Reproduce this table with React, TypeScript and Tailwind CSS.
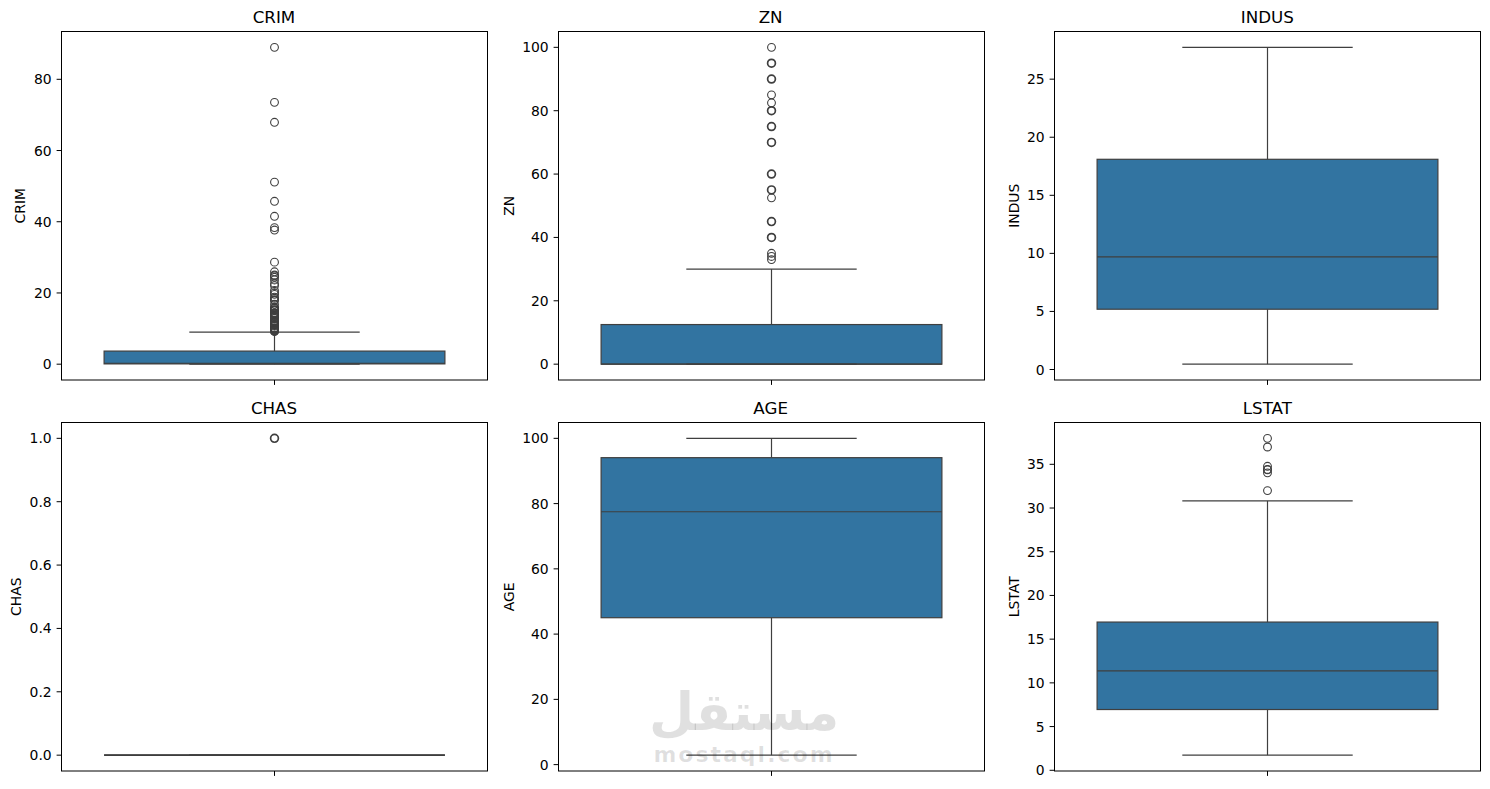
import React from 'react'

// ── Box plot data (seaborn-style, one box per panel) ─────────────────────────
type BoxStats = {
  title: string
  min: number
  max: number
  q1: number
  med: number
  q3: number
  lo: number
  hi: number
  ticks: number[]
  decimals?: number
  labelX: number
  fliers: { v: number; heavy?: boolean }[]
}

const panels: BoxStats[] = [
  {
    title: 'CRIM', min: 0.00632, max: 88.9762,
    q1: 0.082, med: 0.2565, q3: 3.677, lo: 0.00632, hi: 8.98,
    ticks: [0, 20, 40, 60, 80], labelX: 20,
    fliers: [
      88.9762, 73.5341, 67.9208, 51.1358, 45.7461, 41.5292, 38.3518, 37.6619, 28.6558,
      25.9406, 25.0461, 24.8017, 24.3938, 23.6482, 22.5971, 22.0511, 20.7162, 20.0849,
      19.6091, 18.811, 18.4982, 18.0846, 17.8667, 16.8118, 15.8744, 15.8603, 15.5757,
      15.288, 15.1772, 15.0234, 14.4383, 14.3337, 14.2362, 14.0507, 13.9134, 13.6781,
      13.5222, 13.3598, 13.0751, 12.8023, 12.2472, 12.0482, 11.9511, 11.8123, 11.5779,
      11.1604, 11.1081, 11.0874, 10.8342, 10.6718, 10.233, 10.0623, 9.96654, 9.92485,
      9.91655, 9.82349, 9.72418, 9.59571, 9.51363, 9.39063, 9.33889, 9.2323, 9.18702,
    ].map((v) => ({ v })),
  },
  {
    title: 'ZN', min: 0, max: 100,
    q1: 0, med: 0, q3: 12.5, lo: 0, hi: 30,
    ticks: [0, 20, 40, 60, 80, 100], labelX: 11.7,
    fliers: [
      { v: 33 }, { v: 34 }, { v: 35 }, { v: 40, heavy: true }, { v: 45, heavy: true },
      { v: 52.5 }, { v: 55, heavy: true }, { v: 60, heavy: true }, { v: 70, heavy: true },
      { v: 75, heavy: true }, { v: 80, heavy: true }, { v: 82.5 }, { v: 85 },
      { v: 90, heavy: true }, { v: 95, heavy: true }, { v: 100 },
    ],
  },
  {
    title: 'INDUS', min: 0.46, max: 27.74,
    q1: 5.19, med: 9.69, q3: 18.1, lo: 0.46, hi: 27.74,
    ticks: [0, 5, 10, 15, 20, 25], labelX: 20.7,
    fliers: [],
  },
  {
    title: 'CHAS', min: 0, max: 1,
    q1: 0, med: 0, q3: 0, lo: 0, hi: 0,
    ticks: [0, 0.2, 0.4, 0.6, 0.8, 1.0], decimals: 1, labelX: 16,
    fliers: [{ v: 1, heavy: true }],
  },
  {
    title: 'AGE', min: 2.9, max: 100,
    q1: 45.025, med: 77.5, q3: 94.075, lo: 2.9, hi: 100,
    ticks: [0, 20, 40, 60, 80, 100], labelX: 11.7,
    fliers: [],
  },
  {
    title: 'LSTAT', min: 1.73, max: 37.97,
    q1: 6.95, med: 11.36, q3: 16.955, lo: 1.73, hi: 30.81,
    ticks: [0, 5, 10, 15, 20, 25, 30, 35], labelX: 20.7,
    fliers: [31.99, 34.02, 34.37, 34.41, 34.77, 36.98, 37.97].map((v) => ({ v })),
  },
]

const LINE = '#3f3f3f'
const FILL = '#3274a1'

// axes rectangle inside the panel svg
const AX = { x: 61.5, y: 0.5, w: 426, h: 348.5 }

function BoxPanel({ p }: { p: BoxStats }) {
  const r = p.max - p.min
  const yMin = p.min - 0.05 * r
  const yMax = p.max + 0.05 * r
  const y = (v: number) => AX.y + (AX.h * (yMax - v)) / (yMax - yMin)

  const cx = AX.x + AX.w / 2
  const bx0 = AX.x + AX.w * 0.1
  const bx1 = AX.x + AX.w * 0.9
  const cap0 = AX.x + AX.w * 0.3
  const cap1 = AX.x + AX.w * 0.7

  return (
    <div className="flex flex-col">
      <div className="h-[31px] w-[487px] pl-[61px] pt-[8px] text-center text-[16.7px] leading-[19px] text-black">
        {p.title}
      </div>
      <svg width="496" height="360" className="block overflow-visible">
        {/* box */}
        {p.q3 > p.q1 ? (
          <rect x={bx0} y={y(p.q3)} width={bx1 - bx0} height={y(p.q1) - y(p.q3)} fill={FILL} stroke={LINE} strokeWidth={1.2} />
        ) : (
          <line x1={bx0} x2={bx1} y1={y(p.q1)} y2={y(p.q1)} stroke={LINE} strokeWidth={1.6} />
        )}
        {/* whiskers */}
        <line x1={cx} x2={cx} y1={y(p.q3)} y2={y(p.hi)} stroke={LINE} strokeWidth={1.2} />
        <line x1={cx} x2={cx} y1={y(p.q1)} y2={y(p.lo)} stroke={LINE} strokeWidth={1.2} />
        <line x1={cap0} x2={cap1} y1={y(p.hi)} y2={y(p.hi)} stroke={LINE} strokeWidth={1.2} />
        <line x1={cap0} x2={cap1} y1={y(p.lo)} y2={y(p.lo)} stroke={LINE} strokeWidth={1.2} />
        {/* median */}
        <line x1={bx0} x2={bx1} y1={y(p.med)} y2={y(p.med)} stroke={LINE} strokeWidth={1.2} />
        {/* fliers */}
        {p.fliers.map((f, i) => (
          <circle key={i} cx={cx} cy={y(f.v)} r={3.9} fill="none" stroke={LINE} strokeWidth={f.heavy ? 1.7 : 1.1} />
        ))}

        {/* spines */}
        <rect x={AX.x} y={AX.y} width={AX.w} height={AX.h} fill="none" stroke="#000" strokeWidth={1} />

        {/* y ticks */}
        {p.ticks.map((t) => (
          <g key={t}>
            <line x1={AX.x - 4.9} x2={AX.x} y1={y(t)} y2={y(t)} stroke="#000" strokeWidth={1} />
            <text x={AX.x - 9.8} y={y(t)} textAnchor="end" dominantBaseline="central" fontSize="13.9" fill="#000">
              {p.decimals ? t.toFixed(p.decimals) : t}
            </text>
          </g>
        ))}
        {/* x tick */}
        <line x1={cx} x2={cx} y1={AX.y + AX.h} y2={AX.y + AX.h + 4.9} stroke="#000" strokeWidth={1} />

        {/* y label */}
        <text
          x={p.labelX}
          y={AX.y + AX.h / 2}
          transform={`rotate(-90 ${p.labelX} ${AX.y + AX.h / 2})`}
          textAnchor="middle"
          dominantBaseline="central"
          fontSize="13.9"
          fill="#000"
        >
          {p.title}
        </text>
      </svg>
    </div>
  )
}

export default function App() {
  return (
    <div className="relative w-[1490px] h-[789px] bg-white overflow-hidden font-['DejaVu_Sans',sans-serif]">
      <div className="grid grid-cols-3 grid-rows-[391px_398px]">
        {panels.map((p) => (
          <BoxPanel key={p.title} p={p} />
        ))}
      </div>

      {/* ── watermark ─────────────────────────────────────────────── */}
      <div className="absolute left-[640px] top-[681px] w-[208px] flex flex-col items-center pointer-events-none text-black/[0.12] font-bold">
        <div dir="rtl" className="text-[52px] leading-[62px]">مستقل</div>
        <div className="h-[24px] text-[22px] leading-[24px] tracking-[2px]">mostaql.com</div>
      </div>
    </div>
  )
}
